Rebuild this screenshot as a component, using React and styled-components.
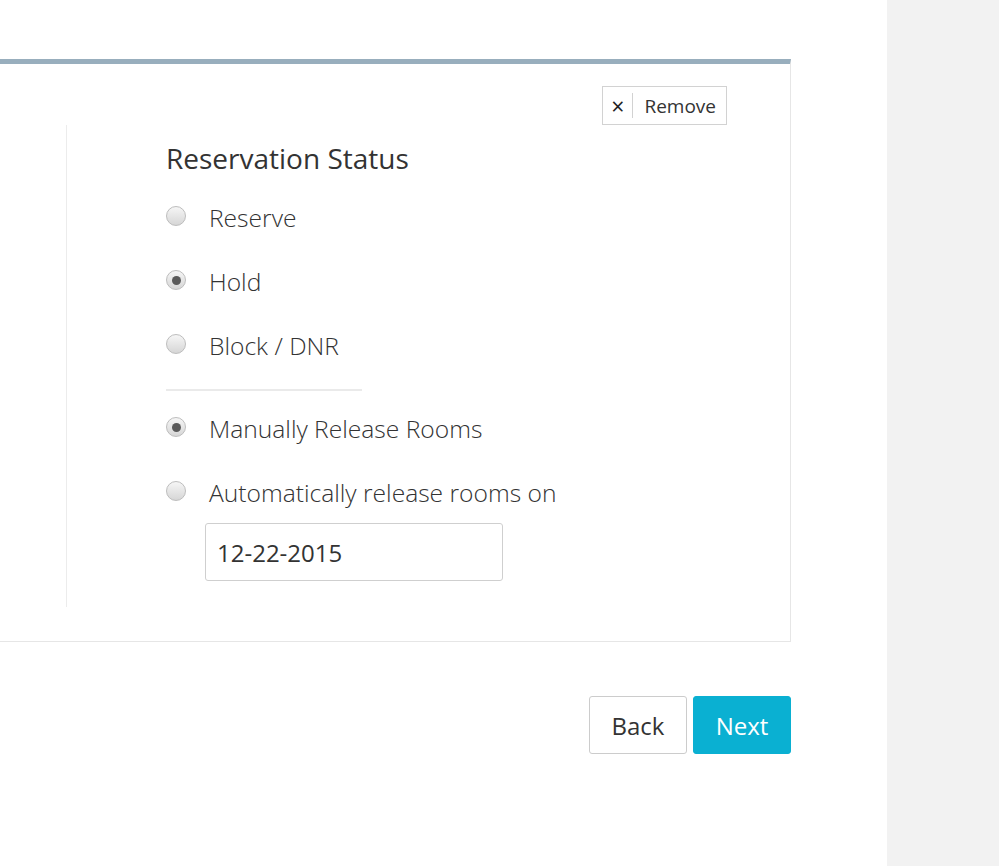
import React from "react"
import styled, { createGlobalStyle } from "styled-components"

const GlobalStyle = createGlobalStyle`
  html, body {
    margin: 0;
    padding: 0;
    background: #fff;
    font-family: "Open Sans", "Liberation Sans", sans-serif;
    color: #333;
  }
`

const Page = styled.div`
  display: flex;
  min-height: 866px;
`

const Main = styled.div`
  width: 887px;
  flex-shrink: 0;
  padding-top: 59px;
  box-sizing: border-box;
`

const Sidebar = styled.div`
  flex: 1;
  background: #f2f2f2;
`

const Card = styled.div`
  width: 791px;
  box-sizing: border-box;
  border-top: 5px solid #98aebd;
  border-right: 1px solid #e6e6e6;
  border-bottom: 1px solid #e6e6e6;
  padding: 22px 0 34px;
`

const CardHeader = styled.div`
  display: flex;
  justify-content: flex-end;
  padding-right: 63px;
`

const RemoveButton = styled.button`
  display: flex;
  align-items: center;
  height: 39px;
  padding: 0 10px 0 0;
  border: 1px solid #d2d2d2;
  background: #fff;
  font-family: "Open Sans", sans-serif;
  font-size: 19px;
  color: #333;
  cursor: pointer;
`

const RemoveIcon = styled.span`
  display: flex;
  align-items: center;
  justify-content: center;
  width: 29px;
  height: 25px;
  border-right: 1px solid #d2d2d2;
  margin-right: 11px;
  font-size: 23px;
  font-weight: 400;
  color: #222;
`

const Body = styled.div`
  display: flex;
  padding-left: 66px;
`

const Section = styled.div`
  border-left: 1px solid #ececec;
  padding: 14px 0 26px 99px;
  flex: 1;
`

const Title = styled.div`
  font-size: 28px;
  line-height: 38px;
  font-weight: 400;
  color: #333;
  margin-bottom: 23px;
`

const Option = styled.label`
  display: flex;
  align-items: center;
  height: 32px;
  margin-bottom: ${p => (p.$last ? "0" : "32px")};
  font-size: 24.6px;
  font-weight: 300;
  color: #333;
  cursor: pointer;
`

const OptionText = styled.span`
  padding-top: 3px;
`

const Radio = styled.span`
  width: 20px;
  height: 20px;
  border-radius: 50%;
  border: 1px solid #bdbdbd;
  background: linear-gradient(#f6f6f6, #d6d6d6);
  box-sizing: border-box;
  margin-right: 23px;
  display: flex;
  align-items: center;
  justify-content: center;

  &::after {
    content: "";
    width: 9px;
    height: 9px;
    border-radius: 50%;
    background: ${p => (p.$checked ? "#5a5a5a" : "transparent")};
  }
`

const Divider = styled.div`
  width: 196px;
  height: 2px;
  background: #eaeaea;
  margin: 29px 0 20px;
`

const DateInput = styled.input`
  display: block;
  margin: 16px 0 0 39px;
  width: 298px;
  height: 58px;
  box-sizing: border-box;
  border: 1px solid #cfcfcf;
  border-radius: 3px;
  padding: 0 11px;
  font-family: "Open Sans", sans-serif;
  font-size: 24px;
  color: #333;
  outline: none;
`

const Actions = styled.div`
  width: 791px;
  display: flex;
  justify-content: flex-end;
  gap: 6px;
  margin-top: 54px;
`

const Button = styled.button`
  width: 98px;
  height: 58px;
  border-radius: 3px;
  font-family: "Open Sans", sans-serif;
  font-size: 24px;
  cursor: pointer;
  border: 1px solid ${p => (p.$primary ? "#0ab0d2" : "#cccccc")};
  background: ${p => (p.$primary ? "#0ab0d2" : "#fff")};
  color: ${p => (p.$primary ? "#fff" : "#333")};
`

const statusOptions = [
  { label: "Reserve", checked: false },
  { label: "Hold", checked: true },
  { label: "Block / DNR", checked: false },
]

export default function App() {
  return (
    <>
      <GlobalStyle />
      <Page>
        <Main>
          <Card>
            <CardHeader>
              <RemoveButton>
                <RemoveIcon>×</RemoveIcon>
                Remove
              </RemoveButton>
            </CardHeader>
            <Body>
              <Section>
                <Title>Reservation Status</Title>
                {statusOptions.map((o, i) => (
                  <Option key={o.label} $last={i === statusOptions.length - 1}>
                    <Radio $checked={o.checked} />
                    <OptionText>{o.label}</OptionText>
                  </Option>
                ))}
                <Divider />
                <Option>
                  <Radio $checked />
                  <OptionText>Manually Release Rooms</OptionText>
                </Option>
                <Option $last>
                  <Radio />
                  <OptionText>Automatically release rooms on</OptionText>
                </Option>
                <DateInput defaultValue="12-22-2015" />
              </Section>
            </Body>
          </Card>
          <Actions>
            <Button>Back</Button>
            <Button $primary>Next</Button>
          </Actions>
        </Main>
        <Sidebar />
      </Page>
    </>
  )
}
